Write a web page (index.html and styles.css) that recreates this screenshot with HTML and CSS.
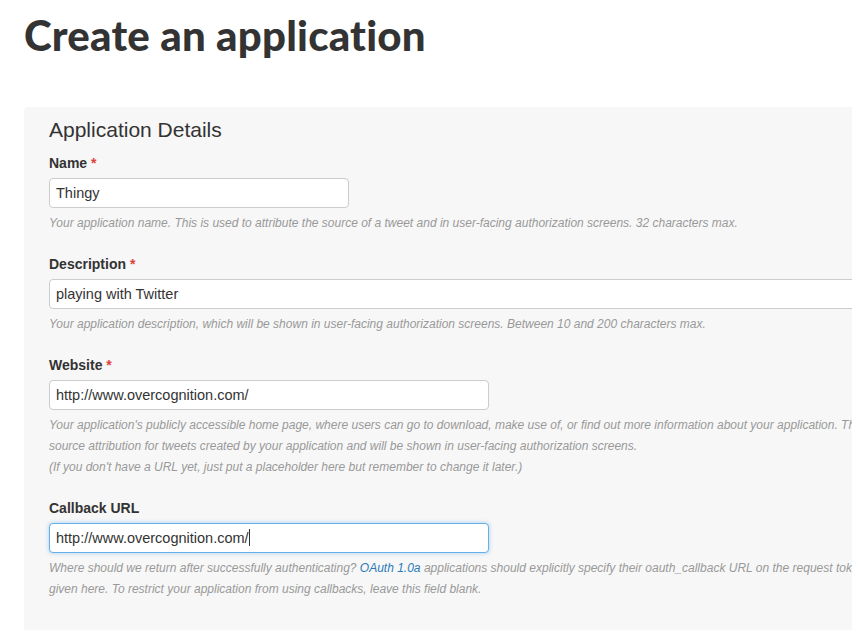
FILE: index.html
```html
<!DOCTYPE html>
<html>
<head>
<meta charset="utf-8">
<link rel="stylesheet" href="styles.css">
</head>
<body>
<div class="page">
  <h1 class="title">Create an application</h1>
  <div class="panel">
    <h2 class="panel-title">Application Details</h2>
    <div class="group">
      <div class="label">Name <span class="req">*</span></div>
      <div class="input narrow">Thingy</div>
      <div class="help">Your application name. This is used to attribute the source of a tweet and in user-facing authorization screens. 32 characters max.</div>
    </div>
    <div class="group">
      <div class="label">Description <span class="req">*</span></div>
      <div class="input wide">playing with Twitter</div>
      <div class="help">Your application description, which will be shown in user-facing authorization screens. Between 10 and 200 characters max.</div>
    </div>
    <div class="group">
      <div class="label">Website <span class="req">*</span></div>
      <div class="input medium">http://www.overcognition.com/</div>
      <div class="help">Your application's publicly accessible home page, where users can go to download, make use of, or find out more information about your application. This fully-qualified URL is used in the<br>source attribution for tweets created by your application and will be shown in user-facing authorization screens.<br>(If you don't have a URL yet, just put a placeholder here but remember to change it later.)</div>
    </div>
    <div class="group">
      <div class="label">Callback URL</div>
      <div class="input medium focus">http://www.overcognition.com/<span class="caret"></span></div>
      <div class="help">Where should we return after successfully authenticating? <span class="link">OAuth 1.0a</span> applications should explicitly specify their oauth_callback URL on the request token step, regardless of the value<br>given here. To restrict your application from using callbacks, leave this field blank.</div>
    </div>
  </div>
</div>
</body>
</html>
```

FILE: styles.css
```css
html, body {
  margin: 0;
  padding: 0;
  background: #ffffff;
  overflow: hidden;
}
body {
  width: 852px;
  height: 630px;
  font-family: "Liberation Sans", Arial, sans-serif;
  color: #333333;
}
.page {
  padding: 0 0 0 24px;
}
.title {
  margin: 0;
  padding-top: 10px;
  height: 107px;
  box-sizing: border-box;
  font-family: "Lato", "Liberation Sans", sans-serif;
  font-weight: 900;
  font-size: 42px;
  line-height: 50px;
  color: #333333;
  letter-spacing: 0.2px;
}
.panel {
  width: 1100px;
  background: #f7f7f7;
  border-radius: 4px 0 0 0;
  padding: 10px 0 40px 25px;
  box-sizing: border-box;
}
.panel-title {
  margin: 0 0 10px 0;
  font-weight: 400;
  font-size: 21px;
  line-height: 26px;
  color: #333333;
}
.group {
  margin-bottom: 20px;
}
.label {
  font-weight: 700;
  font-size: 14px;
  line-height: 20px;
  margin-bottom: 5px;
  color: #333333;
}
.req {
  color: #e0403a;
}
.input {
  height: 30px;
  box-sizing: border-box;
  border: 1px solid #cccccc;
  border-radius: 4px;
  background: #ffffff;
  padding: 0 6px;
  font-size: 14.5px;
  line-height: 28px;
  color: #333333;
  white-space: nowrap;
}
.narrow { width: 300px; }
.medium { width: 440px; }
.wide { width: 900px; }
.focus {
  border-color: #66afe9;
  box-shadow: 0 0 4px rgba(102, 175, 233, 0.6);
}
.caret {
  display: inline-block;
  width: 1px;
  height: 17px;
  background: #333333;
  vertical-align: -3px;
}
.help {
  margin-top: 5px;
  font-size: 12px;
  line-height: 21px;
  font-style: italic;
  color: #999999;
  white-space: nowrap;
}
.link {
  color: #2a7ab8;
}
```
